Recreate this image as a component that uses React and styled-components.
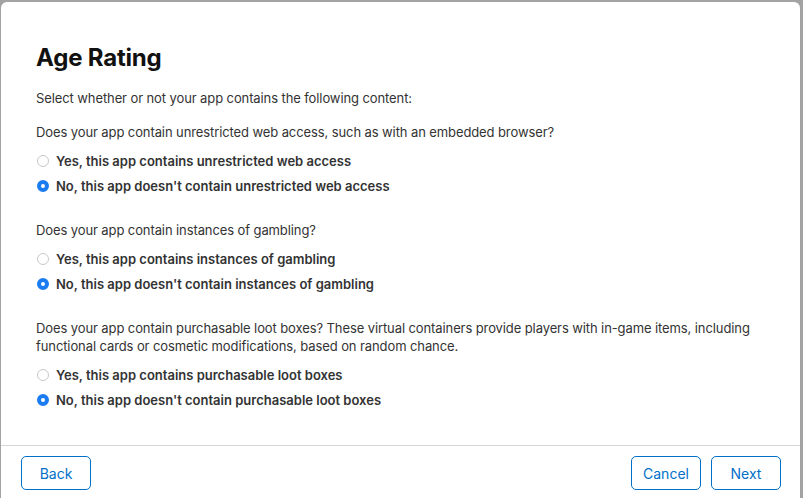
import React, { useState } from 'react'
import styled, { createGlobalStyle } from 'styled-components'

const GlobalStyle = createGlobalStyle`
  html, body {
    margin: 0;
    padding: 0;
    background: #a3a3a3;
  }
  body {
    font-family: Inter, "Liberation Sans", sans-serif;
    -webkit-font-smoothing: antialiased;
  }
`

const Page = styled.div`
  width: 803px;
  height: 498px;
  padding: 2px 3px 0 1px;
  box-sizing: border-box;
  overflow: hidden;
`

const Modal = styled.div`
  background: #fff;
  height: 496px;
  border-radius: 6px 6px 0 0;
  display: flex;
  flex-direction: column;
`

const Body = styled.div`
  flex: 1;
  padding: 41px 35px 0 35px;
`

const Title = styled.h1`
  margin: 0;
  font-size: 24px;
  line-height: 30px;
  font-weight: 700;
  color: #111;
  letter-spacing: -0.2px;
`

const Intro = styled.p`
  margin: 16px 0 0;
  font-size: 13px;
  line-height: 18px;
  color: #333;
  letter-spacing: -0.1px;
`

const Question = styled.fieldset`
  margin: 0;
  padding: 0;
  border: none;
  margin-top: ${p => p.gap}px;
`

const Prompt = styled.p`
  margin: 0 0 7px;
  font-size: 13px;
  line-height: 18px;
  color: #333;
  letter-spacing: -0.1px;
`

const Option = styled.label`
  display: flex;
  align-items: center;
  gap: 7px;
  height: 25px;
  font-size: 13px;
  font-weight: 600;
  color: #333;
  cursor: pointer;
`

const Dot = styled.span`
  width: 12px;
  height: 12px;
  margin-left: 1px;
  border-radius: 50%;
  box-sizing: border-box;
  flex-shrink: 0;
  border: ${p => (p.on ? '4px solid #1a7cf0' : '1px solid #c8c8c8')};
  background: #fff;
`

const Footer = styled.div`
  height: 42px;
  border-top: 1px solid #d6d6d6;
  display: flex;
  align-items: flex-start;
  padding: 10px 19px 0 20px;
  gap: 10px;
`

const Spacer = styled.div`
  flex: 1;
`

const Button = styled.button`
  width: 70px;
  height: 34px;
  border: 1px solid #0070c9;
  border-radius: 5px;
  background: #fff;
  color: #0070c9;
  font-family: inherit;
  font-size: 14px;
  cursor: pointer;
`

const questions = [
  {
    text: 'Does your app contain unrestricted web access, such as with an embedded browser?',
    yes: 'Yes, this app contains unrestricted web access',
    no: "No, this app doesn't contain unrestricted web access",
    gap: 16,
  },
  {
    text: 'Does your app contain instances of gambling?',
    yes: 'Yes, this app contains instances of gambling',
    no: "No, this app doesn't contain instances of gambling",
    gap: 23,
  },
  {
    text: 'Does your app contain purchasable loot boxes? These virtual containers provide players with in-game items, including functional cards or cosmetic modifications, based on random chance.',
    yes: 'Yes, this app contains purchasable loot boxes',
    no: "No, this app doesn't contain purchasable loot boxes",
    gap: 23,
  },
]

export default function App() {
  const [answers, setAnswers] = useState(['no', 'no', 'no'])

  const pick = (i, v) => {
    const next = [...answers]
    next[i] = v
    setAnswers(next)
  }

  return (
    <Page>
      <GlobalStyle />
      <Modal>
        <Body>
          <Title>Age Rating</Title>
          <Intro>Select whether or not your app contains the following content:</Intro>
          {questions.map((q, i) => (
            <Question key={i} gap={q.gap}>
              <Prompt>{q.text}</Prompt>
              <Option onClick={() => pick(i, 'yes')}>
                <Dot on={answers[i] === 'yes'} />
                {q.yes}
              </Option>
              <Option onClick={() => pick(i, 'no')}>
                <Dot on={answers[i] === 'no'} />
                {q.no}
              </Option>
            </Question>
          ))}
        </Body>
        <Footer>
          <Button>Back</Button>
          <Spacer />
          <Button>Cancel</Button>
          <Button>Next</Button>
        </Footer>
      </Modal>
    </Page>
  )
}
